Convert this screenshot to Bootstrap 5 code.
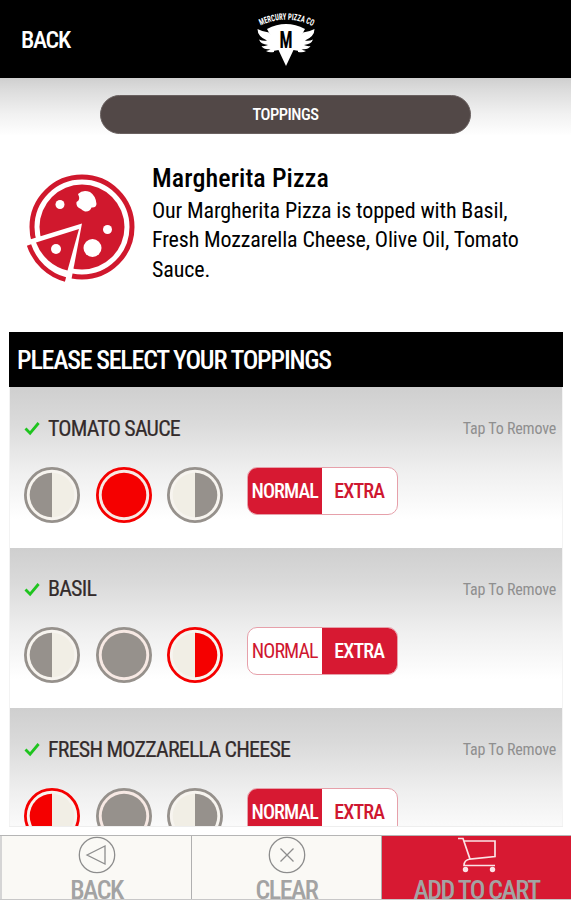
<!DOCTYPE html>
<html lang="en">
<head>
<meta charset="utf-8">
<meta name="viewport" content="width=device-width, initial-scale=1">
<title>Mercury Pizza Co – Toppings</title>
<link rel="stylesheet" href="https://cdn.jsdelivr.net/npm/bootstrap@5.3.0/dist/css/bootstrap.min.css">
<style>
  :root { --brand: #d71932; --taupe: #8f8780; --fade: linear-gradient(#cfcfcf 0, #dadada 22%, #efefef 52%, #fff 82%); }
  html, body { height: 100%; overflow: hidden; }
  body { font-family: "Roboto Condensed", Roboto, sans-serif; font-stretch: 75%; color: #000; background: #fff; line-height: 1; }
  .topbar { height: 78px; padding: 0 21px; display: grid; grid-template-columns: 1fr auto 1fr; }
  .topbar a { font-size: 24px; font-weight: 500; letter-spacing: -1.3px; padding-top: 2px; }
  .hero { height: 254px; background: linear-gradient(#cfcfcf 0, #dcdcdc 12px, #f1f1f1 36px, #fff 58px); padding-top: 17px; }
  .pill { width: 371px; height: 39px; font-size: 16.5px; font-weight: 500; letter-spacing: -.5px; background: #524847; border: 1px solid #6a6160; padding-top: 2px; }
  .about { padding: 29px 30px 0 25px; }
  .pizza-pic { width: 111px; height: 116px; margin-top: 8px; }
  .about h1 { font-size: 26px; font-weight: 500; line-height: 30px; margin: 0; letter-spacing: .1px; }
  .about p { font-size: 22px; line-height: 29.4px; margin: 3px 0 0; letter-spacing: -.13px; }
  .panel { height: 495px; margin: 0 8px 0 9px; border-bottom: 1px solid #eee; }
  .panel-title { height: 55px; padding-left: 8px; font-size: 26px; font-weight: 500; letter-spacing: -1.22px; margin: 0; }
  .topping { height: 160.5px; padding: 26px 6px 0 14px; background: var(--fade); border: solid #f3f3f3; border-width: 0 1px; }
  .topping h2 { font-size: 22px; font-weight: 400; margin: 0; color: #332b2b; line-height: 30px; letter-spacing: -.8px; -webkit-text-stroke: .2px; }
  .remove { font-size: 16px; color: #8f8f8f; letter-spacing: -.2px; padding-top: 2px; }
  .portion { width: 56px; height: 56px; color: #96918c; }
  .portion.on { color: #f50000; }
  .controls { margin-top: 23.5px; gap: 15.5px; }
  .topping h2, .tick { position: relative; top: .5px; }
  .seg { width: 151px; height: 48px; border: 1px solid #e6a0aa; border-radius: 10px; margin-left: 8px; background: #fff; font-size: 20px; letter-spacing: -.9px; color: #cf1730; }
  .seg span { width: 50%; }
  .seg .on { background: var(--brand); color: #fff; font-weight: 500; }
  .seg .mid { font-weight: 500; }
  .footer { height: 65px; margin-top: 8px; border-top: 1px solid #b5b5b5; border-bottom: 1px solid #c8c8c8; }
  .footer a { height: 63px; background: #faf9f5; color: #a3a3a3; font-size: 26px; font-weight: 500; letter-spacing: -1.5px; border-right: 1px solid #b0b0b0; overflow: hidden; }
  .footer a:first-child { border-left: 2px solid #d5d5d5; }
  .footer a.buy { background: var(--brand); border: 0; }
  .footer svg { margin-bottom: 3px; flex: none; }
</style>
</head>
<body>
<svg class="d-none">
  <symbol id="left" viewBox="0 0 56 56"><circle cx="28" cy="28" r="26.6" fill="#f7f4ef" stroke="currentColor" stroke-width="2.8"/><circle cx="28" cy="28" r="22.3" fill="#f1eee5"/><path d="M28 5.7a22.3 22.3 0 0 0 0 44.6z" fill="currentColor"/></symbol>
  <symbol id="full" viewBox="0 0 56 56"><circle cx="28" cy="28" r="26.6" fill="#f7e9e4" stroke="currentColor" stroke-width="2.8"/><circle cx="28" cy="28" r="22.3" fill="currentColor"/></symbol>
  <symbol id="right" viewBox="0 0 56 56"><circle cx="28" cy="28" r="26.6" fill="#f7f4ef" stroke="currentColor" stroke-width="2.8"/><circle cx="28" cy="28" r="22.3" fill="#f1eee5"/><path d="M28 5.7a22.3 22.3 0 0 1 0 44.6z" fill="currentColor"/></symbol>
  <symbol id="tick" viewBox="0 0 16 15"><path d="M1.500 7.500l4.600 4.700L14.600 2" fill="none" stroke="#1fc41f" stroke-width="2.800"/></symbol>
</svg>

<header class="topbar bg-black align-items-center">
  <a href="#" class="text-white text-decoration-none">BACK</a>
  <svg width="60" height="56" viewBox="0 0 60 56" fill="#fff">
    <defs><path id="arc" d="M4.500 14.500Q30 2.800 55.500 14.500"/></defs>
    <text font-size="9" font-weight="700" font-family="Roboto Condensed, Roboto, sans-serif"><textPath href="#arc" textLength="54" lengthAdjust="spacingAndGlyphs">MERCURY PIZZA CO</textPath></text>
    <path d="M11 18Q30 8 49 18L43.500 28Q42 33 43 40L37.500 39L30 55L22.500 39L17 40Q18 33 16.500 28z"/>
    <path d="M1.500 18Q7 21 13 21.500L18 27V41Q13 42 10 40Q13 39.500 14.500 38Q8 39 5.500 35Q9 35.500 12 34Q4.500 33 3 28.500Q7 30.500 11 29.500Q1.500 25.500 1.500 18zM58.500 18Q53 21 47 21.500L42 27V41Q47 42 50 40Q47 39.500 45.500 38Q52 39 54.500 35Q51 35.500 48 34Q55.500 33 57 28.500Q53 30.500 49 29.500Q58.500 25.500 58.500 18z"/>
    <text x="30" y="36.500" text-anchor="middle" font-size="24" font-weight="700" fill="#000" textLength="13" lengthAdjust="spacingAndGlyphs" font-family="Roboto Condensed, Roboto, sans-serif">M</text>
  </svg>
</header>

<section class="hero">
  <div class="pill rounded-pill text-white mx-auto d-flex align-items-center justify-content-center">TOPPINGS</div>
  <div class="about d-flex">
    <svg class="pizza-pic flex-shrink-0" viewBox="0 0 111 116">
      <circle cx="57" cy="56" r="50" fill="none" stroke="#d0182d" stroke-width="5"/>
      <circle cx="57" cy="56" r="42.500" fill="#d0182d"/>
      <path d="M57 52.500L-8 72.500L0 116H45z" fill="#fff"/>
      <path d="M54 58L11 71.500A45 45 0 0 0 42.500 99.500z" fill="#d0182d"/>
      <path d="M4 74A53 53 0 0 0 40.500 108.500" fill="none" stroke="#d0182d" stroke-width="4.500"/>
      <g fill="#fff"><circle cx="35" cy="33.500" r="4.500"/><circle cx="82.500" cy="58.500" r="4.500"/><circle cx="31" cy="78" r="5"/><circle cx="67.500" cy="77" r="9"/>
      <path d="M53 23Q58 18 65 21Q71 25 71.500 33Q71 37 66.500 36.500Q65 41 60 40.500Q57 39 56 38Q50.500 36 51.500 31Q56 29 53 23z"/></g>
    </svg>
    <div class="ms-3">
      <h1>Margherita Pizza</h1>
      <p>Our Margherita Pizza is topped with Basil, Fresh Mozzarella Cheese, Olive Oil, Tomato Sauce.</p>
    </div>
  </div>
</section>

<main class="panel overflow-hidden">
  <div class="panel-title bg-black text-white d-flex align-items-center">PLEASE SELECT YOUR TOPPINGS</div>

  <section class="topping">
    <div class="d-flex align-items-center">
      <svg class="tick me-2" width="16" height="15"><use href="#tick"/></svg><h2>TOMATO SAUCE</h2><span class="remove ms-auto">Tap To Remove</span>
    </div>
    <div class="controls d-flex">
      <svg class="portion"><use href="#left"/></svg><svg class="portion on"><use href="#full"/></svg><svg class="portion"><use href="#right"/></svg>
      <div class="seg d-flex overflow-hidden text-center"><span class="on d-flex align-items-center justify-content-center">NORMAL</span><span class="mid d-flex align-items-center justify-content-center">EXTRA</span></div>
    </div>
  </section>

  <section class="topping">
    <div class="d-flex align-items-center">
      <svg class="tick me-2" width="16" height="15"><use href="#tick"/></svg><h2>BASIL</h2><span class="remove ms-auto">Tap To Remove</span>
    </div>
    <div class="controls d-flex">
      <svg class="portion"><use href="#left"/></svg><svg class="portion"><use href="#full"/></svg><svg class="portion on"><use href="#right"/></svg>
      <div class="seg d-flex overflow-hidden text-center"><span class="d-flex align-items-center justify-content-center">NORMAL</span><span class="on d-flex align-items-center justify-content-center">EXTRA</span></div>
    </div>
  </section>

  <section class="topping">
    <div class="d-flex align-items-center">
      <svg class="tick me-2" width="16" height="15"><use href="#tick"/></svg><h2>FRESH MOZZARELLA CHEESE</h2><span class="remove ms-auto">Tap To Remove</span>
    </div>
    <div class="controls d-flex">
      <svg class="portion on"><use href="#left"/></svg><svg class="portion"><use href="#full"/></svg><svg class="portion"><use href="#right"/></svg>
      <div class="seg d-flex overflow-hidden text-center"><span class="on d-flex align-items-center justify-content-center">NORMAL</span><span class="mid d-flex align-items-center justify-content-center">EXTRA</span></div>
    </div>
  </section>
</main>

<footer class="footer row g-0">
  <a href="#" class="col d-flex flex-column align-items-center text-decoration-none">
    <svg width="38" height="38" viewBox="0 0 38 38" fill="none" stroke="#8d8d8d" stroke-width="1.300"><circle cx="19" cy="19" r="17.700"/><path d="M9 19L27 10V28z"/></svg>BACK</a>
  <a href="#" class="col d-flex flex-column align-items-center text-decoration-none">
    <svg width="38" height="38" viewBox="0 0 38 38" fill="none" stroke="#8d8d8d" stroke-width="1.300"><circle cx="19" cy="19" r="17.700"/><path d="M12.500 12.500l13 13m0-13l-13 13"/></svg>CLEAR</a>
  <a href="#" class="buy col d-flex flex-column align-items-center text-decoration-none">
    <svg width="38" height="38" viewBox="0 0 38 38" fill="none" stroke="#fbe3e6" stroke-width="1.700"><path d="M0 2.500H5L12 23L37 20.500V5H6M12 23Q6 24 6 29.500H37"/><g fill="#fbe3e6" stroke="none"><circle cx="7.500" cy="33.500" r="2.700"/><circle cx="34.500" cy="33.500" r="2.700"/></g></svg>ADD TO CART</a>
</footer>
<script src="https://cdn.jsdelivr.net/npm/bootstrap@5.3.0/dist/js/bootstrap.bundle.min.js"></script>
</body>
</html>
